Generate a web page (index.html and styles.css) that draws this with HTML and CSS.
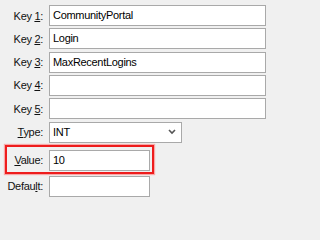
FILE: index.html
```html
<!DOCTYPE html>
<html>
<head>
<meta charset="utf-8">
<link rel="stylesheet" href="styles.css">
</head>
<body>
<div class="form">
  <div class="rows">
    <div class="row"><div class="label">Key <u>1</u>:</div><div class="field wide">CommunityPortal</div></div>
    <div class="row"><div class="label">Key <u>2</u>:</div><div class="field wide">Login</div></div>
    <div class="row"><div class="label">Key <u>3</u>:</div><div class="field wide">MaxRecentLogins</div></div>
    <div class="row"><div class="label">Key <u>4</u>:</div><div class="field wide"></div></div>
    <div class="row"><div class="label">Key <u>5</u>:</div><div class="field wide"></div></div>
    <div class="row"><div class="label"><u>T</u>ype:</div><div class="field select"><span class="sel-text">INT</span><svg class="chev" width="8" height="6" viewBox="0 0 8 6"><polyline points="1,1 4,4 7,1" fill="none" stroke="#555" stroke-width="1.6"/></svg></div></div>
  </div>
  <div class="row highlight"><div class="label short"><u>V</u>alue:</div><div class="field small">10</div></div>
  <div class="row last"><div class="label">Defau<u>l</u>t:</div><div class="field small"></div></div>
</div>
</body>
</html>
```
FILE: styles.css
```css
html, body {
  margin: 0;
  padding: 0;
  background: #f0f0f0;
}
body {
  width: 271px;
  height: 202px;
  overflow: hidden;
  font-family: "Liberation Sans", Arial, sans-serif;
  font-size: 11px;
  letter-spacing: -0.3px;
  color: #000;
}
.form {
  padding-top: 5px;
  display: flex;
  flex-direction: column;
}
.rows {
  display: flex;
  flex-direction: column;
  gap: 2.34px;
}
.row {
  display: flex;
  align-items: center;
  gap: 6px;
  height: 21px;
}
.label {
  width: 43px;
  text-align: right;
  white-space: nowrap;
  color: #111;
  flex: none;
}
.label.short {
  width: 36px;
}
u {
  text-decoration-thickness: 1px;
  text-underline-offset: 1px;
}
.field {
  box-sizing: border-box;
  height: 21px;
  border: 1px solid #a9a9a9;
  background: #fff;
  padding: 0 3px;
  line-height: 19px;
  white-space: nowrap;
  overflow: hidden;
  flex: none;
}
.field.wide {
  width: 217px;
}
.field.select {
  width: 133px;
  display: flex;
  align-items: center;
  justify-content: space-between;
  padding-right: 5px;
}
.chev {
  display: block;
}
.field.small {
  width: 101px;
}
.row.highlight {
  box-sizing: border-box;
  height: 29px;
  width: 149px;
  margin-top: 2px;
  margin-left: 5px;
  border: 2px solid #ee1c1c;
  box-shadow: 0 0 1px 1px rgba(255, 80, 80, 0.45);
  padding: 3px 2px 1px 0;
  align-items: flex-start;
}
.row.highlight .label {
  line-height: 21px;
}
.row.last {
  margin-top: 2px;
}
```
